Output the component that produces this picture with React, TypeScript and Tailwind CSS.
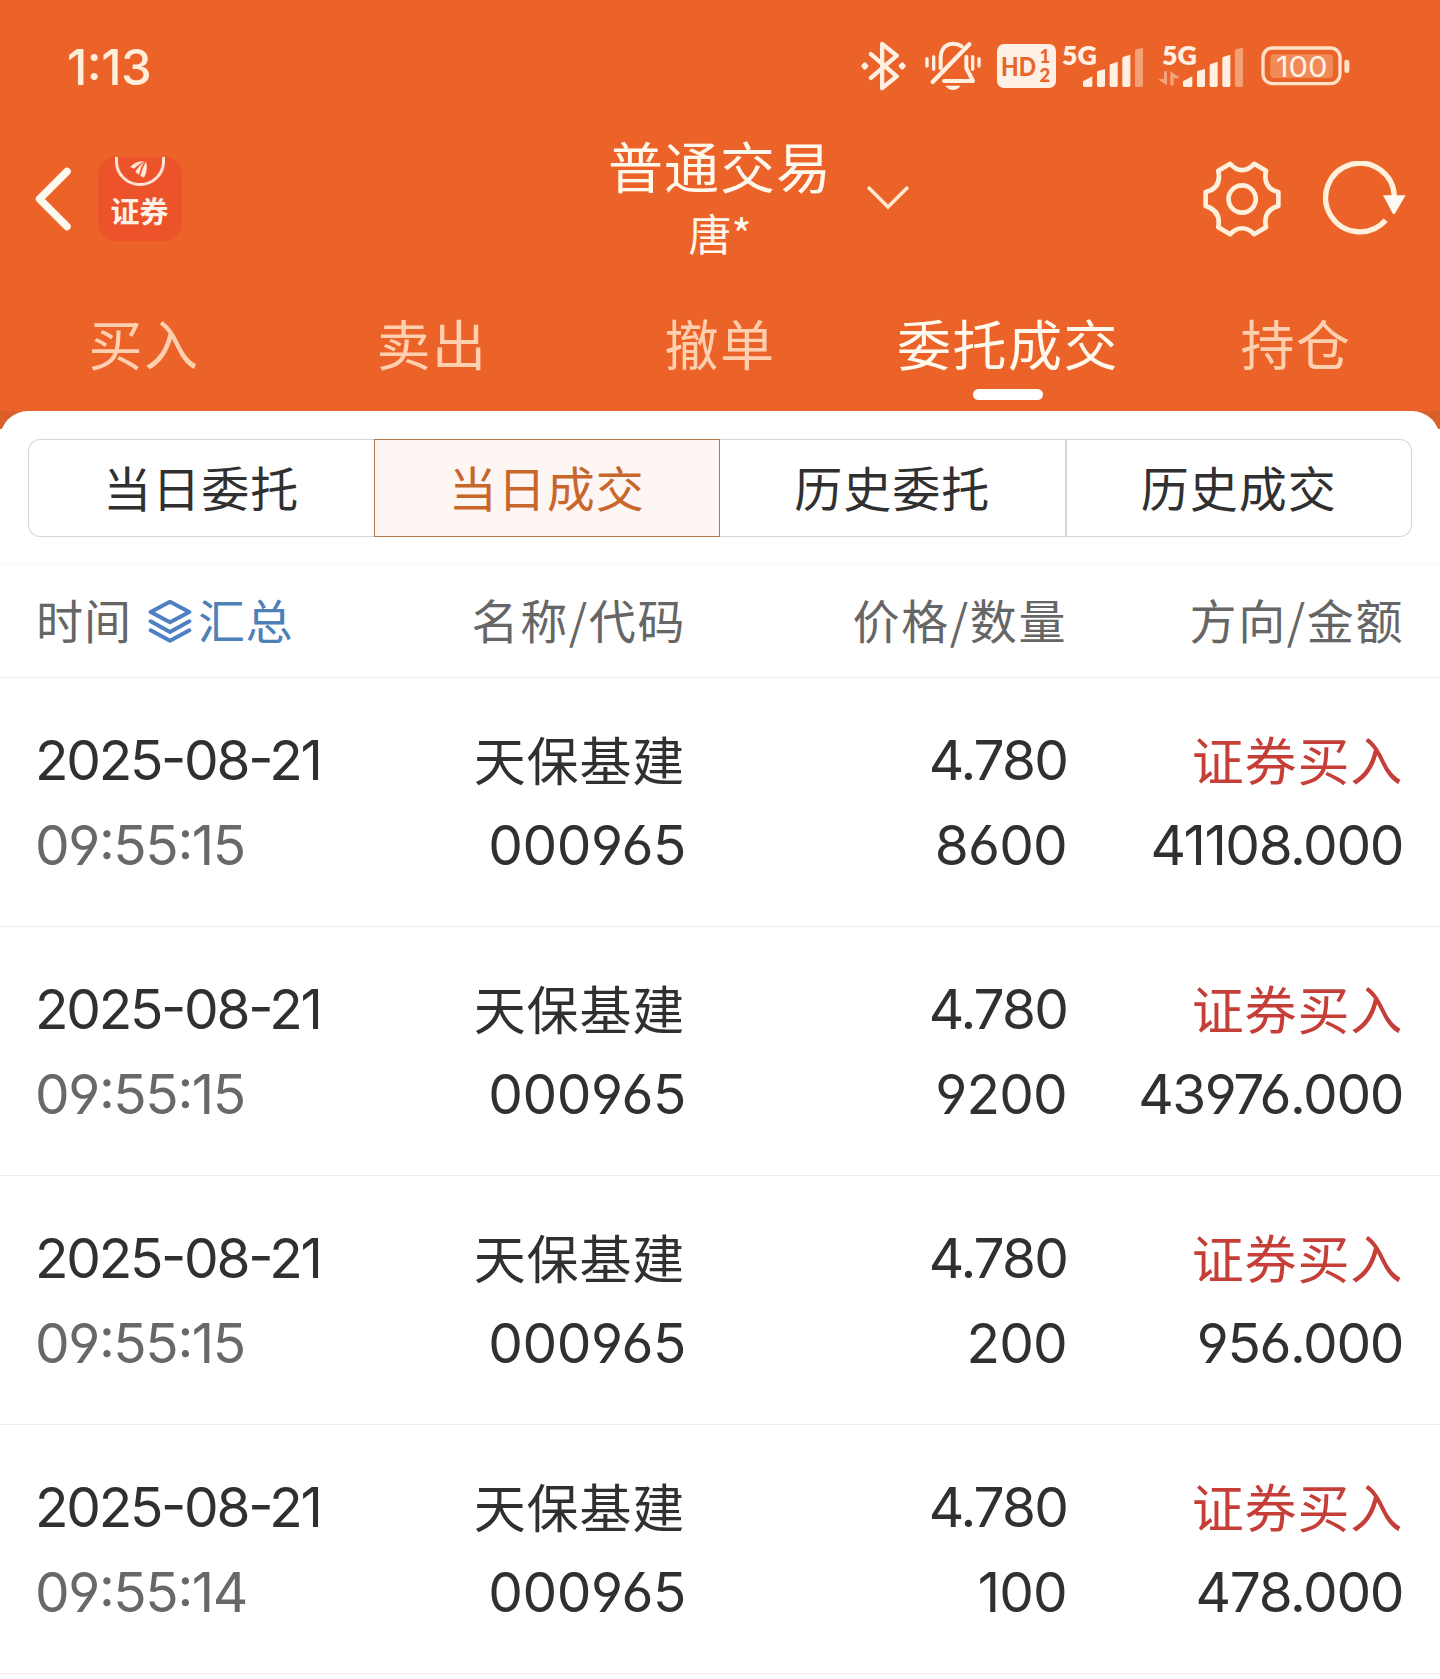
import React from 'react';

interface Deal {
  date: string;
  time: string;
  name: string;
  code: string;
  price: string;
  amount: string;
  side: string;
  total: string;
}

const deals: Deal[] = [
  { date: '2025-08-21', time: '09:55:15', name: '天保基建', code: '000965', price: '4.780', amount: '8600', side: '证券买入', total: '41108.000' },
  { date: '2025-08-21', time: '09:55:15', name: '天保基建', code: '000965', price: '4.780', amount: '9200', side: '证券买入', total: '43976.000' },
  { date: '2025-08-21', time: '09:55:15', name: '天保基建', code: '000965', price: '4.780', amount: '200', side: '证券买入', total: '956.000' },
  { date: '2025-08-21', time: '09:55:14', name: '天保基建', code: '000965', price: '4.780', amount: '100', side: '证券买入', total: '478.000' },
];

const mainTabs = ['买入', '卖出', '撤单', '委托成交', '持仓'];
const subTabs = ['当日委托', '当日成交', '历史委托', '历史成交'];

const BluetoothIcon: React.FC = () => (
  <svg className="w-[45px] h-[50px]" viewBox="62 35 136 148" fill="none" stroke="#fff0e2" strokeWidth="13" strokeLinecap="round" strokeLinejoin="round">
    <path d="M92 73 170 140 126 176V42L170 78 92 145" />
    <path d="M73 103 79 109 73 115 68 109ZM187 103 192 109 187 115 181 109Z" strokeWidth="10" fill="#fff0e2" />
  </svg>
);

const BellOffIcon: React.FC = () => (
  <svg className="w-[56px] h-[50px]" viewBox="255 37 168 150" fill="none" stroke="#fff0e2" strokeWidth="12" strokeLinecap="round" strokeLinejoin="round">
    <path d="M302 118V88C302 60 318 45 340 45C350 45 358 48 365 53" />
    <path d="M379 84V118L399 157H312" />
    <path d="M278 160 388 47" strokeWidth="13" />
    <path d="M261 90V112M281 84V122M398 84V122M417 90V112" strokeWidth="10" />
    <path d="M316 171H362Q352 184 339 184T316 171Z" fill="#fff0e2" stroke="none" />
  </svg>
);

const HdBadge: React.FC = () => (
  <svg className="w-[59px] h-[44px]" viewBox="0 0 59 44" fontFamily="Lato, sans-serif" fontWeight="900" fill="#e8662c">
    <rect width="59" height="44" rx="7" fill="#fff0e6" />
    <text x="4" y="31.500" fontSize="26" textLength="35" lengthAdjust="spacingAndGlyphs">HD</text>
    <text fontSize="18.500">
      <tspan x="42.500" y="19">1</tspan>
      <tspan x="42.500" y="38">2</tspan>
    </text>
  </svg>
);

const SignalIcon: React.FC<{ traffic?: boolean }> = ({ traffic }) => (
  <svg className="w-[84px] h-[64px]" viewBox="57 12 252 192" fill="#fff0e2">
    <text x="66" y="104" fontFamily="Lato, sans-serif" fontWeight="800" fontSize="80" textLength="105" lengthAdjust="spacingAndGlyphs">5G</text>
    {traffic && (
      <g fill="#f6a37b">
        <path d="M72 124H81V166L57 150V147H72ZM91 124 117 141V145H101V166H91Z" />
      </g>
    )}
    <path d="M129 154 157 139V166Q157 171 152 171H134Q129 171 129 166Z" />
    <path d="M171 127Q171 123 175 122L195 117V166Q195 171 190 171H176Q171 171 171 166Z" />
    <path d="M209 107Q209 103 213 102L233 95V166Q233 171 228 171H214Q209 171 209 166Z" />
    <path d="M247 85Q247 81 251 80L271 74V166Q271 171 266 171H252Q247 171 247 166Z" />
    <path d="M285 63Q285 59 289 58L309 53V166Q309 171 304 171H290Q285 171 285 166Z" fill="#f5a077" />
  </svg>
);

const BatteryIcon: React.FC = () => (
  <svg className="w-[89px] h-[40px]" viewBox="362 49 267 120">
    <rect x="368" y="55" width="231" height="107" rx="28" fill="none" stroke="#ffe2c9" strokeWidth="10" />
    <rect x="390" y="74" width="188" height="71" rx="12" fill="#f28a57" />
    <rect x="612" y="90" width="15" height="40" rx="7" fill="#ffe2c9" />
    <text x="407" y="141" fontFamily="Inter, sans-serif" fontSize="86" fill="#fff3e6" textLength="155" lengthAdjust="spacingAndGlyphs">100</text>
  </svg>
);

const StatusBar: React.FC = () => (
  <div className="flex h-[132px] items-center pl-[67px] pr-[90px] text-[#ffeeda]">
    <span className="pt-[3px] font-[Inter,sans-serif] text-[49px] font-medium tracking-[-0.5px] [font-feature-settings:'case']">1:13</span>
    <div className="ml-auto flex items-center">
      <BluetoothIcon />
      <div className="ml-[19px] flex"><BellOffIcon /></div>
      <div className="ml-[16px] flex"><HdBadge /></div>
      <div className="ml-[3px] flex"><SignalIcon /></div>
      <div className="ml-4 flex"><SignalIcon traffic /></div>
      <div className="ml-[18px] flex"><BatteryIcon /></div>
    </div>
  </div>
);

const BrokerLogo: React.FC = () => (
  <svg className="w-[84px] h-[84px]" viewBox="0 0 84 84">
    <rect width="84" height="84" rx="17" fill="#ec532a" />
    <path d="M18.500 0V4.500A23.500 23 0 0 0 65.500 4.500V0" fill="none" stroke="#ffe3d3" strokeWidth="3" />
    <path d="M47 4Q38 3 32 10L36 12Q41 7 47 4ZM47 4Q41 8 37 15L41 18Q43 10 47 4ZM48 4Q44 11 42 19L46 21Q51 12 48 4Z" fill="#ffeadd" stroke="#ec532a" strokeWidth="0.500" />
    <text x="12.500" y="65.500" fontFamily="'Noto Sans CJK SC', sans-serif" fontWeight="700" fontSize="29" fill="#fff1e8">证券</text>
  </svg>
);

const GearIcon: React.FC = () => (
  <svg className="w-[78px] h-[76px]" viewBox="67 59 235 228" fill="none" stroke="#fff0dc" strokeWidth="14" strokeLinejoin="round">
    <path d="M149 67Q165 86 185 86T221 67L257 88Q246 140 294 152V194Q246 208 257 258L221 279Q205 261 185 261T149 279L113 258Q122 208 75 194V152Q124 140 113 88Z" />
    <circle cx="185" cy="173" r="41" />
  </svg>
);

const RefreshIcon: React.FC = () => (
  <svg className="w-[83px] h-[75px]" viewBox="427 65 249 225" fill="none">
    <path d="M615 243A103 103 0 1 1 641 172" stroke="#fff0dc" strokeWidth="16" />
    <path d="M607 168H675L642 224H637Z" fill="#fffaf2" />
  </svg>
);

const Header: React.FC = () => (
  <div className="grid h-[134px] grid-cols-[1fr_224px_1fr] items-center">
    <div className="flex items-center pl-[34px]">
      <svg className="w-[38px] h-[64px]" viewBox="0 0 38 64" fill="none" stroke="#fffaf0" strokeWidth="7.500" strokeLinecap="round" strokeLinejoin="round">
        <path d="M33 4.500 5.500 32 33 59.500" />
      </svg>
      <div className="ml-[26px] flex"><BrokerLogo /></div>
    </div>
    <div className="flex flex-col items-center whitespace-nowrap text-[#fff8ec]">
      <span className="-mt-1 text-[55px] leading-[70px] tracking-[1px]">普通交易</span>
      <span className="text-[43px] leading-[66px]">唐*</span>
    </div>
    <div className="flex items-center pl-[34px] pr-[34px]">
      <svg className="-mt-[2px] w-[44px] h-[26px]" viewBox="0 0 44 26" fill="none" stroke="#ffead4" strokeWidth="3.500" strokeLinecap="round">
        <path d="M3 3 22 22 41 3" />
      </svg>
      <div className="-mt-px ml-auto flex items-center gap-[42px]">
        <GearIcon />
        <RefreshIcon />
      </div>
    </div>
  </div>
);

const MainTabs: React.FC = () => (
  <div className="grid h-[145px] grid-cols-5">
    {mainTabs.map((tab) => {
      const active = tab === '委托成交';
      return (
        <div key={tab} className={`flex flex-col items-center pt-[37px] ${active ? 'text-[#fff9ee]' : 'text-[#ffd0b0]'}`}>
          <span className="whitespace-nowrap text-[54px] leading-[80px] tracking-[1.500px]">{tab}</span>
          {active && <span className="mt-[6px] h-[11px] w-[70px] rounded-md bg-white" />}
        </div>
      );
    })}
  </div>
);

const SubTabs: React.FC = () => (
  <div className="flex px-7 pt-7">
    {subTabs.map((tab, i) => {
      const active = i === 1;
      const base = 'flex h-[98px] flex-1 items-center justify-center pb-[4px] text-[48px] tracking-[1px]';
      if (active) {
        return <div key={tab} className={`${base} border border-[#b07a4c] bg-[#fef6f3] text-[#c8662c]`}>{tab}</div>;
      }
      return (
        <div
          key={tab}
          className={`${base} border-y border-[#d6d6d6] text-[#303030] ${i === 0 ? 'rounded-l-xl border-l' : ''} ${i === 2 ? 'border-r-2' : ''} ${i === 3 ? 'rounded-r-xl border-r' : ''}`}
        >
          {tab}
        </div>
      );
    })}
  </div>
);

const LayersIcon: React.FC = () => (
  <svg className="w-[44px] h-[44px]" viewBox="446 598 132 132" fill="none" stroke="#4f80c4" strokeWidth="12" strokeLinecap="round" strokeLinejoin="round">
    <path d="M512 606 570 637 512 668 454 637Z" />
    <path d="M454 665 512 697 570 665M454 692 512 723 570 692" />
  </svg>
);

const columns = 'grid grid-cols-[331px_319px_381px_337px] pl-9';

const TableHead: React.FC = () => (
  <div className={`${columns} mt-[27px] h-[114px] items-center border-y border-y-[#ededed] border-t-[#f6f6f6] text-right text-[47px] text-[#666]`}>
    <div className="flex items-center">
      <span className="-mt-[3px] tracking-[1px]">时间</span>
      <div className="ml-4 mr-[6px] flex"><LayersIcon /></div>
      <span className="-mt-[3px] tracking-[0.500px] text-[#4f80b8]">汇总</span>
    </div>
    <div className="-mt-[3px] tracking-[1.600px]">名称/代码</div>
    <div className="-mt-[3px] tracking-[1.600px]">价格/数量</div>
    <div className="-mt-[3px] tracking-[1.600px]">方向/金额</div>
  </div>
);

const DealRow: React.FC<{ deal: Deal }> = ({ deal }) => (
  <div className={`${columns} h-[249px] border-b border-[#ededed] pt-[40px] text-right font-[Inter,'Noto_Sans_CJK_SC',sans-serif] text-[55px] leading-[85px] text-[#303030] [font-feature-settings:'cv03','cv04','case']`}>
    <div className="-ml-px text-left">
      <p className="tracking-[-2.300px]">{deal.date}</p>
      <p className="tracking-[-1.400px] text-[#686868]">{deal.time}</p>
    </div>
    <div>
      <p className="pt-1 pr-px text-[52px] leading-[81px] tracking-[0.800px]">{deal.name}</p>
      <p className="tracking-[-0.500px]">{deal.code}</p>
    </div>
    <div>
      <p className="tracking-[-1.900px]">{deal.price}</p>
      <p className="tracking-[-0.800px]">{deal.amount}</p>
    </div>
    <div>
      <p className="pt-1 pr-px text-[52px] leading-[81px] tracking-[0.800px] text-[#c53e37]">{deal.side}</p>
      <p className="pr-px tracking-[-1.400px]">{deal.total}</p>
    </div>
  </div>
);

export default function App() {
  return (
    <div className="h-[1679px] w-[1440px] overflow-hidden bg-white font-['Noto_Sans_CJK_SC',sans-serif]">
      <div className="bg-[#ec632a]">
        <StatusBar />
        <Header />
        <MainTabs />
      </div>
      <div className="bg-[linear-gradient(#d9602a_18px,#fff_18px)]">
        <div className="rounded-t-[28px] bg-white">
          <SubTabs />
          <TableHead />
          {deals.map((deal, i) => (
            <DealRow key={i} deal={deal} />
          ))}
        </div>
      </div>
    </div>
  );
}
